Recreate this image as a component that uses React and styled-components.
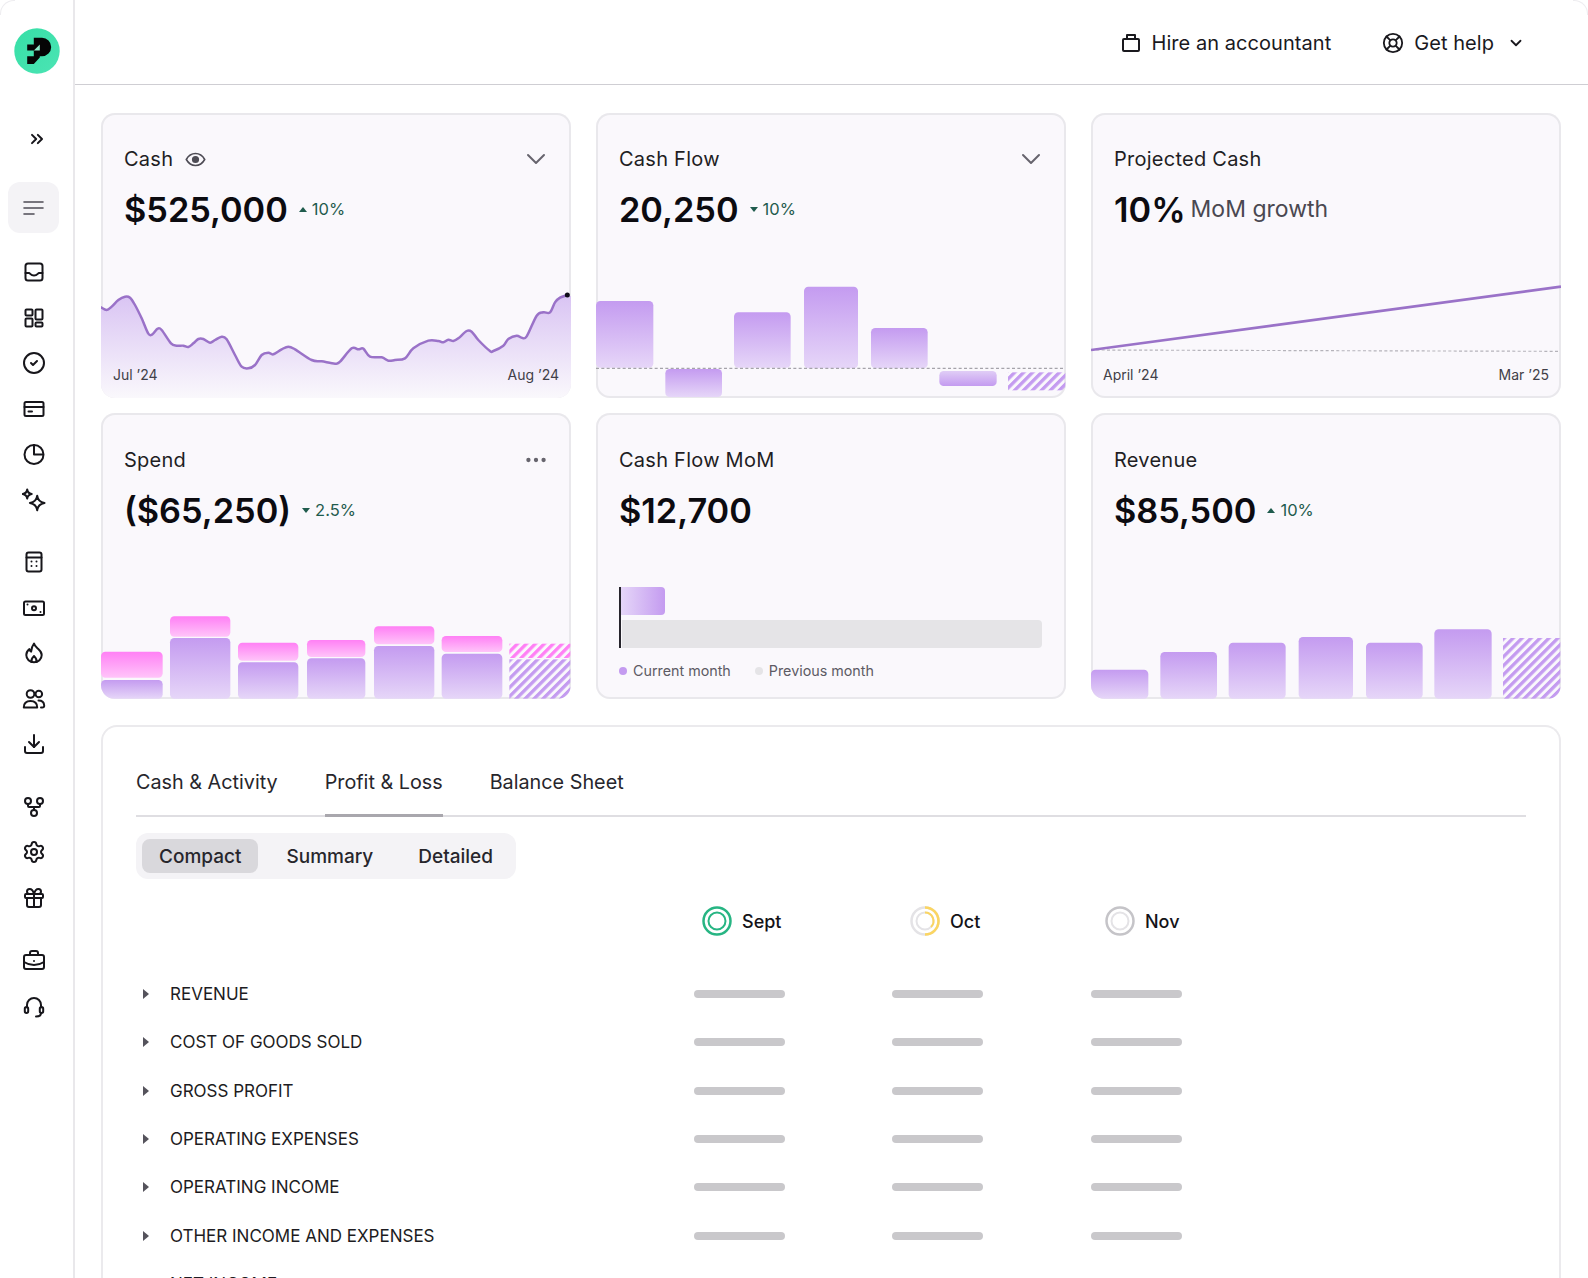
import React from 'react';
import styled, { createGlobalStyle } from 'styled-components';
import {
  ChevronsRight,
  ChevronDown,
  CircleCheck,
  Download,
  GitFork,
  Settings,
  Gift,
  BriefcaseBusiness,
  LifeBuoy,
  Ellipsis,
} from 'lucide-react';

const GlobalStyle = createGlobalStyle`
  html, body {
    margin: 0;
    height: 1278px;
    overflow: hidden;
    background: #fff;
  }
  * {
    box-sizing: border-box;
  }
  body {
    font-family: 'Inter', 'Liberation Sans', sans-serif;
    color: #141318;
  }
`;

const Page = styled.div`
  position: relative;
  display: flex;
  height: 1278px;
  overflow: hidden;
  background: #fff;
  &::before,
  &::after {
    content: '';
    position: absolute;
    top: 0;
    width: 14px;
    height: 14px;
    border-top: 1px solid #eeedf0;
  }
  &::before {
    left: 0;
    border-left: 1px solid #eeedf0;
    border-top-left-radius: 14px;
  }
  &::after {
    right: 0;
    border-right: 1px solid #eeedf0;
    border-top-right-radius: 14px;
  }
`;

const Sidebar = styled.aside`
  width: 75px;
  flex: none;
  border-right: 2px solid #e9e8eb;
  padding-top: 28px;
  display: flex;
  flex-direction: column;
`;

const LogoMark = styled.div`
  width: 46px;
  height: 46px;
  margin-left: 13.5px;
`;

const Expand = styled.div`
  height: 20px;
  width: 46px;
  margin: 55px 0 0 14px;
  display: flex;
  align-items: center;
  justify-content: center;
  color: #17161b;
`;

const ActiveItem = styled.div`
  width: 51px;
  height: 51px;
  margin: 33px 0 0 8px;
  border-radius: 12px;
  background: #f4f3f6;
  display: flex;
  align-items: center;
  justify-content: center;
`;

const NavGroup = styled.nav`
  margin-top: 17px;
  display: flex;
  flex-direction: column;
  &:first-of-type {
    margin-top: 16.5px;
  }
  &:last-of-type {
    margin-top: 18px;
  }
`;

const NavItem = styled.div`
  width: 51px;
  height: 45.5px;
  margin-left: 8px;
  display: flex;
  align-items: center;
  justify-content: center;
  color: #17161b;
`;

const Main = styled.main`
  flex: 1;
  min-width: 0;
`;

const TopBar = styled.header`
  height: 85px;
  padding: 2px 63px 0 0;
  border-bottom: 1px solid #cfced3;
  display: flex;
  align-items: center;
  justify-content: flex-end;
  gap: 51px;
`;

const TopAction = styled.div`
  display: flex;
  align-items: center;
  gap: 10px;
  font-size: 20px;
  letter-spacing: 0.05px;
  color: #1a191e;
`;

const Caretbox = styled.span`
  display: flex;
  margin-left: 3px;
`;

const Content = styled.div`
  padding: 28px 27px 0 26px;
`;

const CardGrid = styled.section`
  display: grid;
  grid-template-columns: repeat(3, 470px);
  grid-template-rows: 285px 286px;
  column-gap: 25px;
  row-gap: 15px;
`;

const Card = styled.article`
  position: relative;
  display: flex;
  flex-direction: column;
  overflow: hidden;
  padding-top: ${(p) => (p.$low ? '35px' : '34px')};
  background: #faf8fc;
  box-shadow: inset 0 0 0 2px #e9e8ec;
  border-radius: 14px;
`;

const CardHead = styled.div`
  display: flex;
  align-items: center;
  height: 24px;
  padding: 0 19px 0 23px;
  gap: 12px;
  font-size: 20px;
  letter-spacing: 0.25px;
  color: #1f1e24;
`;

const CardMenu = styled.span`
  margin-left: auto;
  width: 32px;
  display: flex;
  justify-content: center;
  color: #66646d;
`;

const ValueRow = styled.div`
  display: flex;
  align-items: center;
  height: 44px;
  margin-top: 16px;
  padding: 0 23px;
`;

const Value = styled.span`
  font-size: 34.3px;
  font-weight: 600;
  color: #0c0b10;
`;

const Note = styled.span`
  margin-left: 5px;
  font-size: 23px;
  color: #4a4851;
`;

const Delta = styled.span`
  display: flex;
  align-items: center;
  gap: 5px;
  margin-left: 11px;
  font-size: 16.5px;
  color: #1f5b4d;
`;

const Caret = styled.i`
  width: 0;
  height: 0;
  border-left: 4.5px solid transparent;
  border-right: 4.5px solid transparent;
  ${(p) => (p.$down ? 'border-top: 5px solid #1f5b4d;' : 'border-bottom: 5px solid #1f5b4d;')}
`;

const ChartArea = styled.div`
  position: relative;
  height: 127px;
  margin-top: auto;
  svg {
    display: block;
  }
`;

const AxisLabel = styled.span`
  position: absolute;
  bottom: 15px;
  ${(p) => (p.$end ? 'right: 12px;' : 'left: 12px;')}
  font-size: 14px;
  color: #413f48;
`;

const Compare = styled.div`
  margin-top: auto;
  padding: 0 24px 19px 23px;
`;

const CompareBars = styled.div`
  display: flex;
  flex-direction: column;
  align-items: flex-start;
  gap: 5px;
  border-left: 2px solid #26242c;
`;

const CompareBar = styled.div`
  height: 28px;
  border-radius: 0 4px 4px 0;
  margin-left: ${(p) => (p.$current ? '0' : '1px')};
  width: ${(p) => (p.$current ? '44px' : '420px')};
  background: ${(p) => (p.$current ? 'linear-gradient(90deg, #e5d6f8, #c49bf0)' : '#e5e4e7')};
`;

const Legend = styled.div`
  display: flex;
  gap: 24px;
  margin-top: 14px;
  font-size: 14.3px;
  line-height: 18px;
  color: #5d5b64;
`;

const LegendItem = styled.span`
  display: flex;
  align-items: center;
  gap: 6px;
  &::before {
    content: '';
    width: 8px;
    height: 8px;
    border-radius: 50%;
    background: ${(p) => p.$color};
  }
`;

const Panel = styled.section`
  margin-top: 26px;
  padding: 41px 33px 0;
  background: #fff;
  border: 2px solid #ebeaed;
  border-bottom: none;
  border-radius: 16px 16px 0 0;
`;

const Tabs = styled.div`
  display: flex;
  gap: 47px;
  height: 49px;
  border-bottom: 2px solid #dfdee2;
`;

const Tab = styled.div`
  height: 49px;
  line-height: 28px;
  padding-bottom: 18px;
  font-size: 19.8px;
  color: #27262c;
  border-bottom: 3px solid ${(p) => (p.$active ? '#a9a7ad' : 'transparent')};
`;

const ViewSwitch = styled.div`
  display: inline-flex;
  gap: 11px;
  margin-top: 16px;
  padding: 6px;
  background: #f4f3f6;
  border-radius: 12px;
`;

const ViewOption = styled.div`
  height: 34px;
  padding: 0 17px;
  line-height: 36px;
  font-size: 19px;
  font-weight: 500;
  color: #27262c;
  border-radius: 8px;
  background: ${(p) => (p.$active ? '#d9d8dc' : 'transparent')};
`;

const MonthRow = styled.div`
  display: flex;
  height: 30px;
  margin-top: 27px;
  padding-left: 566px;
`;

const Month = styled.div`
  display: flex;
  align-items: center;
  gap: 10px;
  width: ${(p) => p.$width}px;
  font-size: 18px;
  font-weight: 500;
  color: #141318;
`;

const Rows = styled.div`
  margin-top: 34px;
`;

const Row = styled.div`
  display: grid;
  grid-template-columns: 450px repeat(3, 91px);
  column-gap: 107.5px;
  align-items: center;
  height: 48.3px;
`;

const RowLabel = styled.div`
  display: flex;
  align-items: center;
  gap: 21px;
  padding-left: 7px;
  font-size: 17px;
  color: #1d1c22;
  &::before {
    content: '';
    border-left: 6px solid #55535c;
    border-top: 5px solid transparent;
    border-bottom: 5px solid transparent;
  }
`;

const Skeleton = styled.div`
  height: 8px;
  border-radius: 4px;
  background: #c9c8cb;
`;

const Glyph = ({ children, size = 24, stroke = 2 }) => (
  <svg width={size} height={size} viewBox="0 0 24 24" fill="none" stroke="currentColor" strokeWidth={stroke} strokeLinecap="round" strokeLinejoin="round">
    {children}
  </svg>
);

const Logo = () => (
  <svg width="46" height="46" viewBox="0 0 46 46">
    <defs>
      <linearGradient id="logoFill" x1="0" y1="0" x2="1" y2="1">
        <stop offset="0" stopColor="#36dfa6" />
        <stop offset="1" stopColor="#4ce4b4" />
      </linearGradient>
    </defs>
    <circle cx="23" cy="23" r="22.7" fill="url(#logoFill)" />
    <path d="M19.8 9.800H28a9.200 9.200 0 0 1 0 18.400h-2.200V29.500l-6 6.500H13.200V28.200h6.600v-5.700h-6.600v-6h6.600z" fill="#050505" />
    <path d="M19.8 22.500l6-6v6z" fill="#8fedcb" />
  </svg>
);

const navGroups = [
  [
    <Glyph key="inbox">
      <rect x="3.500" y="3.500" width="17" height="17" rx="2.500" />
      <path d="M3.500 13h3.500c1.200 0 1.600 2.600 5 2.600s3.800-2.600 5-2.600h3.500" />
    </Glyph>,
    <Glyph key="grid">
      <rect x="3.500" y="3.500" width="7" height="6" rx="1" />
      <rect x="3.500" y="12.500" width="7" height="8" rx="1" />
      <rect x="13.500" y="3.500" width="7" height="10" rx="1" />
      <rect x="13.500" y="16.500" width="7" height="4" rx="1" />
    </Glyph>,
    <CircleCheck key="check" size={24} strokeWidth={2} />,
    <Glyph key="card">
      <rect x="2.500" y="5" width="19" height="14" rx="1.500" />
      <path d="M2.500 10h19M6.500 14.500h3.500" />
    </Glyph>,
    <Glyph key="pie">
      <circle cx="12" cy="12.500" r="9.500" />
      <path d="M12 3v9.500h9" />
    </Glyph>,
    <Glyph key="sparkle">
      <path d="M15.200 7.700Q16 14 22.500 15 16 16 15.200 22.300 14.400 16 7.900 15 14.400 14 15.200 7.700Z" />
      <path d="M5.200 1.500Q5.800 5.400 9.700 6 5.800 6.600 5.200 10.500 4.600 6.600.7 6 4.600 5.400 5.200 1.500Z" />
    </Glyph>,
  ],
  [
    <Glyph key="calc">
      <rect x="4.500" y="2.500" width="15" height="19" rx="2" />
      <path d="M4.500 7.500h15M9.500 11.500h0M14.500 11.500h0M9.500 16h0M14.500 16h0" />
    </Glyph>,
    <Glyph key="cash">
      <rect x="2" y="5.500" width="20" height="13.500" rx="1.500" />
      <circle cx="12" cy="12.200" r="2" />
      <path d="M5.500 8.500h0M18.500 16h0" />
    </Glyph>,
    <Glyph key="flame">
      <path d="M12 2.500c.6 2.600 2.400 3.900 4.300 5.600 2 1.800 3.400 3.700 3.400 6 0 4.300-3.400 7.200-7.700 7.200s-7.700-2.900-7.700-7.200c0-2.500 1.300-4.700 3.100-6 .2 1.200.7 2 1.700 2.500C9.500 7.500 10.300 4.700 12 2.500z" />
      <path d="M9.500 21c-.8-2.800.8-4.300 2.500-6 1.700 1.700 3.300 3.200 2.500 6" />
    </Glyph>,
    <Glyph key="users">
      <circle cx="8.500" cy="7" r="3.800" />
      <circle cx="16.800" cy="7" r="3.300" />
      <path d="M1.800 20.500c0-4.500 2.500-6.500 6.700-6.500s6.700 2 6.700 6.500z" />
      <path d="M16.500 13.500c3.500 0 5.500 1.500 5.700 5 .1 1.300-.6 2-2 2h-1.200" />
    </Glyph>,
    <Download key="download" size={24} strokeWidth={2} />,
  ],
  [
    <GitFork key="fork" size={24} strokeWidth={2} />,
    <Settings key="settings" size={24} strokeWidth={2} />,
    <Gift key="gift" size={24} strokeWidth={2} />,
  ],
  [
    <BriefcaseBusiness key="briefcase" size={24} strokeWidth={2} />,
    <Glyph key="headset">
      <path d="M5 12.500V10a7 7 0 0 1 14 0v2.500" />
      <rect x="2.800" y="12" width="3.400" height="6" rx="1.700" />
      <rect x="17.800" y="12" width="3.400" height="6" rx="1.700" />
      <path d="M19 18c0 2-2 3.500-5 3.500" />
    </Glyph>,
  ],
];

const cashPoints = [
  [18, 607], [35, 615], [50, 605], [70, 585], [90, 575], [105, 578], [120, 600], [140, 640], [160, 686],
  [172, 688], [188, 671], [200, 675], [228, 715], [245, 722], [265, 722], [280, 726], [295, 715], [310, 702],
  [325, 702], [345, 713], [360, 705], [380, 695], [395, 703], [420, 750], [440, 785], [460, 790], [480, 780],
  [500, 750], [520, 743], [535, 748], [560, 733], [580, 725], [600, 733], [650, 765], [680, 769], [720, 776],
  [735, 770], [770, 730], [790, 733], [805, 731], [825, 755], [860, 757], [880, 767], [900, 765], [930, 760],
  [955, 730], [1000, 707], [1030, 708], [1045, 712], [1060, 704], [1075, 708], [1090, 700], [1115, 678],
  [1130, 680], [1150, 705], [1185, 738], [1195, 738], [1225, 722], [1240, 702], [1265, 692], [1280, 698],
  [1295, 694], [1325, 632], [1345, 622], [1365, 622], [1380, 592], [1395, 578], [1417, 570],
];

const smooth = (pts) =>
  pts.reduce((d, [x, y], i, a) => {
    if (!i) return `M${x} ${y}`;
    const p0 = a[i - 2] || a[i - 1];
    const p1 = a[i - 1];
    const p3 = a[i + 1] || [x, y];
    return `${d} C${p1[0] + (x - p0[0]) / 6} ${p1[1] + (y - p0[1]) / 6} ${x - (p3[0] - p1[0]) / 6} ${y - (p3[1] - p1[1]) / 6} ${x} ${y}`;
  }, '');

const cashLine = smooth(cashPoints);

// chart numbers are in thirds of a pixel
const TOP_VIEW = '18 498 1410 381';
const BOTTOM_VIEW = '18 486 1410 381';

const ChartDefs = ({ id }) => (
  <defs>
    <linearGradient id={`${id}-purple`} x1="0" y1="0" x2="0" y2="1">
      <stop offset="0" stopColor="#c49bf0" />
      <stop offset="1" stopColor="#e6d6f8" />
    </linearGradient>
    <linearGradient id={`${id}-flip`} x1="0" y1="1" x2="0" y2="0">
      <stop offset="0" stopColor="#c49bf0" />
      <stop offset="1" stopColor="#e0cdf6" />
    </linearGradient>
    <linearGradient id={`${id}-pink`} x1="0" y1="0" x2="0" y2="1">
      <stop offset="0" stopColor="#ff80f5" />
      <stop offset="1" stopColor="#ffc4f9" />
    </linearGradient>
    <pattern id={`${id}-hatch`} width="19" height="19" patternUnits="userSpaceOnUse" patternTransform="rotate(45)">
      <rect width="10" height="19" fill="#c49bf0" />
    </pattern>
    <pattern id={`${id}-hatchPink`} width="19" height="19" patternUnits="userSpaceOnUse" patternTransform="rotate(45)">
      <rect width="10" height="19" fill="#ff80f5" />
    </pattern>
  </defs>
);

const BarChart = ({ id, view, bars, children }) => (
  <svg width="470" height="127" viewBox={view}>
    <ChartDefs id={id} />
    {bars.map(([x0, x1, y0, y1, fill = 'purple'], i) => (
      <rect key={i} x={x0} y={y0} width={x1 - x0} height={y1 - y0} rx={fill.startsWith('hatch') ? 0 : 13} fill={`url(#${id}-${fill})`} />
    ))}
    {children}
  </svg>
);

const cashFlowBars = [
  [18, 190, 588, 788],
  [226, 396, 792, 876],
  [432, 602, 622, 788],
  [642, 804, 545, 790],
  [843, 1013, 669, 790],
  [1048, 1220, 798, 843, 'flip'],
  [1254, 1426, 802, 856, 'hatch'],
];

const spendBars = [
  [18, 203, 725, 803, 'pink'], [18, 203, 810, 866],
  [225, 406, 619, 680, 'pink'], [225, 406, 684, 866],
  [429, 610, 698, 752, 'pink'], [429, 610, 757, 866],
  [636, 811, 690, 741, 'pink'], [636, 811, 745, 866],
  [837, 1018, 649, 703, 'pink'], [837, 1018, 708, 866],
  [1040, 1222, 678, 726, 'pink'], [1040, 1222, 731, 866],
  [1243, 1426, 701, 744, 'hatchPink'], [1243, 1426, 748, 866, 'hatch'],
];

const revenueBars = [
  [18, 190, 779, 866],
  [226, 396, 726, 866],
  [431, 602, 698, 866],
  [641, 804, 681, 866],
  [843, 1013, 698, 866],
  [1048, 1220, 658, 866],
  [1254, 1426, 684, 866, 'hatch'],
];

const tableRows = [
  'Revenue',
  'Cost of goods sold',
  'Gross profit',
  'Operating expenses',
  'Operating income',
  'Other income and expenses',
  'Net income',
];

const MonthRing = ({ outer, inner, arc }) => (
  <svg width="30" height="30" viewBox="0 0 30 30" fill="none">
    <circle cx="15" cy="15" r="13.500" stroke={outer} strokeWidth="2.500" />
    <circle cx="15" cy="15" r="8.500" stroke={inner} strokeWidth="2" />
    {arc && (
      <>
        <path d="M15 1.500A13.500 13.500 0 0 1 15 28.500" stroke={arc} strokeWidth="2.500" />
        <path d="M15 6.500A8.500 8.500 0 0 1 21 21" stroke={arc} strokeWidth="2" />
      </>
    )}
  </svg>
);

const CardTitle = ({ title, children, menu }) => (
  <CardHead>
    {title}
    {children}
    {menu === 'chevron' && (
      <CardMenu>
        <ChevronDown size={32} strokeWidth={1.500} />
      </CardMenu>
    )}
    {menu === 'dots' && (
      <CardMenu>
        <Ellipsis size={26} strokeWidth={2} />
      </CardMenu>
    )}
  </CardHead>
);

const Stat = ({ value, delta, down }) => (
  <ValueRow>
    <Value>{value}</Value>
    {delta && (
      <Delta>
        <Caret $down={down} />
        {delta}
      </Delta>
    )}
  </ValueRow>
);

const App = () => (
  <Page>
    <GlobalStyle />
    <Sidebar>
      <LogoMark>
        <Logo />
      </LogoMark>
      <Expand>
        <ChevronsRight size={20} strokeWidth={2.400} />
      </Expand>
      <ActiveItem>
        <svg width="21" height="16" viewBox="0 0 21 16" fill="none" stroke="#4e4c55" strokeWidth="1.600" strokeLinecap="round">
          <path d="M1 2h19M1 8h19M1 14h10" />
        </svg>
      </ActiveItem>
      {navGroups.map((group, i) => (
        <NavGroup key={i}>
          {group.map((icon) => (
            <NavItem key={icon.key}>{icon}</NavItem>
          ))}
        </NavGroup>
      ))}
    </Sidebar>
    <Main>
      <TopBar>
        <TopAction>
          <svg width="22" height="22" viewBox="0 0 22 22" fill="none" stroke="currentColor" strokeWidth="2" strokeLinejoin="round">
            <rect x="3" y="7" width="16" height="12" rx="1" />
            <path d="M7 7V3h8v4" />
          </svg>
          Hire an accountant
        </TopAction>
        <TopAction>
          <LifeBuoy size={22} strokeWidth={2} />
          Get help
          <Caretbox>
            <ChevronDown size={18} strokeWidth={2.400} />
          </Caretbox>
        </TopAction>
      </TopBar>
      <Content>
        <CardGrid>
          <Card>
            <CardTitle title="Cash" menu="chevron">
              <svg width="21" height="21" viewBox="0 0 24 24" fill="none" stroke="#4e4c55" strokeWidth="1.800">
                <path d="M1.500 12C4 7.500 7.500 5.200 12 5.200S20 7.500 22.500 12C20 16.500 16.500 18.800 12 18.800S4 16.500 1.500 12z" />
                <circle cx="12" cy="12" r="3.200" fill="#4e4c55" />
              </svg>
            </CardTitle>
            <Stat value="$525,000" delta="10%" />
            <ChartArea>
              <svg width="470" height="127" viewBox={TOP_VIEW}>
                <defs>
                  <linearGradient id="cashArea" x1="0" y1="0" x2="0" y2="1">
                    <stop offset="0" stopColor="#d9c4f3" />
                    <stop offset="1" stopColor="#faf8fc" />
                  </linearGradient>
                </defs>
                <path d={`${cashLine} L1428 574 L1428 879 L18 879 Z`} fill="url(#cashArea)" />
                <path d={cashLine} fill="none" stroke="#9a72c8" strokeWidth="7.500" strokeLinecap="round" />
                <circle cx="1417" cy="570" r="7.500" fill="#0f0c18" />
              </svg>
              <AxisLabel>Jul ’24</AxisLabel>
              <AxisLabel $end>Aug ’24</AxisLabel>
            </ChartArea>
          </Card>
          <Card>
            <CardTitle title="Cash Flow" menu="chevron" />
            <Stat value="20,250" delta="10%" down />
            <ChartArea>
              <BarChart id="flow" view={TOP_VIEW} bars={cashFlowBars}>
                <path d="M18 790H1426" stroke="#a5a3aa" strokeWidth="3.500" strokeDasharray="9 7" />
              </BarChart>
            </ChartArea>
          </Card>
          <Card>
            <CardTitle title="Projected Cash" />
            <ValueRow>
              <Value>10%</Value>
              <Note>MoM growth</Note>
            </ValueRow>
            <ChartArea>
              <svg width="470" height="127" viewBox={TOP_VIEW}>
                <path d="M18 735L1420 739" stroke="#b5b3ba" strokeWidth="3.500" strokeDasharray="9 7" />
                <path d="M18 735L1428 545" stroke="#9a72c8" strokeWidth="8" />
              </svg>
              <AxisLabel>April ’24</AxisLabel>
              <AxisLabel $end>Mar ’25</AxisLabel>
            </ChartArea>
          </Card>
          <Card $low>
            <CardTitle title="Spend" menu="dots" />
            <Stat value="($65,250)" delta="2.5%" down />
            <ChartArea>
              <BarChart id="spend" view={BOTTOM_VIEW} bars={spendBars} />
            </ChartArea>
          </Card>
          <Card $low>
            <CardTitle title="Cash Flow MoM" />
            <Stat value="$12,700" />
            <Compare>
              <CompareBars>
                <CompareBar $current />
                <CompareBar />
              </CompareBars>
              <Legend>
                <LegendItem $color="#c49bf0">Current month</LegendItem>
                <LegendItem $color="#e5e4e7">Previous month</LegendItem>
              </Legend>
            </Compare>
          </Card>
          <Card $low>
            <CardTitle title="Revenue" />
            <Stat value="$85,500" delta="10%" />
            <ChartArea>
              <BarChart id="revenue" view={BOTTOM_VIEW} bars={revenueBars} />
            </ChartArea>
          </Card>
        </CardGrid>
        <Panel>
          <Tabs>
            <Tab>Cash &amp; Activity</Tab>
            <Tab $active>Profit &amp; Loss</Tab>
            <Tab>Balance Sheet</Tab>
          </Tabs>
          <ViewSwitch>
            <ViewOption $active>Compact</ViewOption>
            <ViewOption>Summary</ViewOption>
            <ViewOption>Detailed</ViewOption>
          </ViewSwitch>
          <MonthRow>
            <Month $width={208}>
              <MonthRing outer="#27b583" inner="#27b583" />
              Sept
            </Month>
            <Month $width={195}>
              <MonthRing outer="#e4e3e6" inner="#e4e3e6" arc="#fbd561" />
              Oct
            </Month>
            <Month $width={100}>
              <MonthRing outer="#c5c4c8" inner="#e4e3e6" />
              Nov
            </Month>
          </MonthRow>
          <Rows>
            {tableRows.map((label) => (
              <Row key={label}>
                <RowLabel>{label.toUpperCase()}</RowLabel>
                <Skeleton />
                <Skeleton />
                <Skeleton />
              </Row>
            ))}
          </Rows>
        </Panel>
      </Content>
    </Main>
  </Page>
);

export default App;
